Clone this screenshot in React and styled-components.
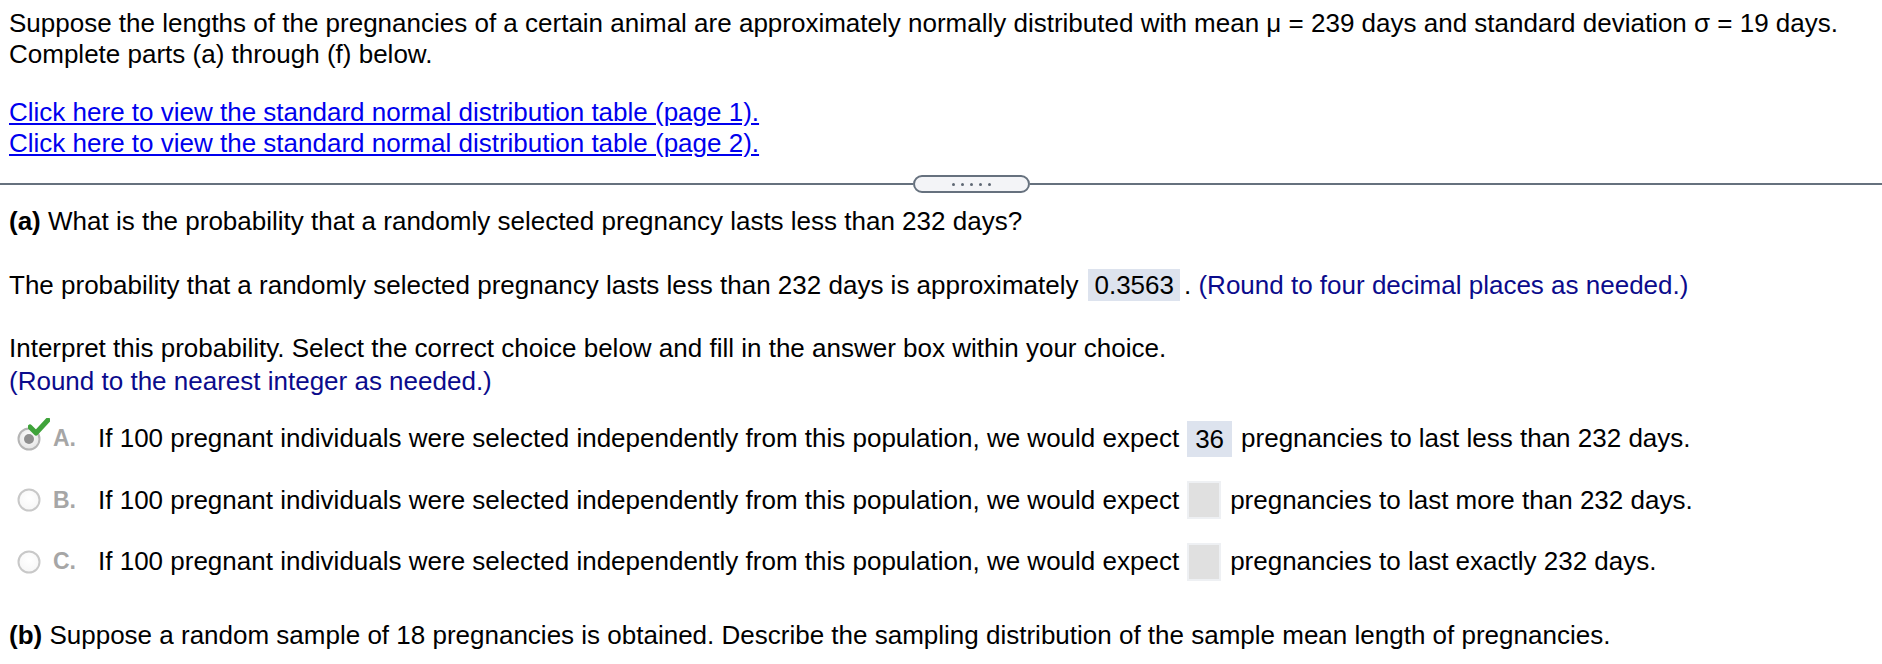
import React from "react";
import styled, { createGlobalStyle } from "styled-components";

const Global = createGlobalStyle`
  html, body { margin: 0; padding: 0; background: #fff; }
  body {
    font-family: "Liberation Sans", Arial, Helvetica, sans-serif;
    font-size: 26px;
    line-height: 31px;
    color: #000;
  }
`;

const Page = styled.div`
  padding-top: 8px;
  width: 1882px;
`;

const Section = styled.div`
  padding-left: 9px;
  margin-top: ${(p) => p.$mt || 0}px;
`;

const Para = styled.p`
  margin: 0;
  margin-top: ${(p) => p.$mt || 0}px;
  color: ${(p) => p.$color || "#000"};
  white-space: nowrap;
`;

const Link = styled.a`
  display: block;
  color: #0000ee;
  text-decoration: underline;
  text-underline-offset: 2px;
  white-space: nowrap;
`;

const Divider = styled.div`
  display: flex;
  align-items: center;
  height: 18px;
  margin-top: 16px;
`;

const Rule = styled.div`
  height: 2px;
  background: #66717e;
  flex: ${(p) => (p.$fixed ? `0 0 ${p.$fixed}px` : "1 1 auto")};
`;

const Pill = styled.div`
  flex: 0 0 auto;
  box-sizing: border-box;
  width: 117px;
  height: 18px;
  border: 2px solid #66717e;
  border-radius: 9px;
  background: #f3f4f7;
  display: flex;
  align-items: center;
  justify-content: center;
  gap: 6px;
`;

const Dot = styled.span`
  width: 3px;
  height: 3px;
  border-radius: 50%;
  background: #5f6874;
`;

const Bold = styled.b`
  font-weight: bold;
`;

const Row = styled.div`
  display: flex;
  align-items: center;
  height: ${(p) => p.$h || 34}px;
  margin-top: ${(p) => p.$mt || 0}px;
  white-space: nowrap;
`;

const Hint = styled.span`
  color: #0b0b8c;
`;

const AnswerBox = styled.span`
  display: inline-flex;
  align-items: center;
  height: 32px;
  padding: 0 6px;
  margin: 0 4px 0 10px;
  background: #dde3ee;
`;

const ChoiceList = styled.div`
  margin-top: 11px;
`;

const Choice = styled.div`
  display: flex;
  align-items: center;
  height: 61.5px;
  white-space: nowrap;
  padding-left: 17px;
`;

const RadioWrap = styled.span`
  position: relative;
  width: 24px;
  height: 24px;
  flex: 0 0 24px;
  display: inline-block;
`;

const Check = styled.svg`
  position: absolute;
  left: 11px;
  top: -9px;
`;

const Letter = styled.span`
  width: 45px;
  margin-left: 12px;
  color: #a6a6a6;
  font-weight: bold;
  font-size: 23px;
`;

const Blank = styled.span`
  display: inline-block;
  box-sizing: border-box;
  margin: 0 9px 0 8px;
  height: ${(p) => (p.$filled ? 36 : 38)}px;
  min-width: ${(p) => (p.$filled ? 40 : 34)}px;
  padding: 0 ${(p) => (p.$filled ? 8 : 0)}px;
  line-height: 36px;
  background: ${(p) => (p.$filled ? "#dde3ee" : "#e0e0e0")};
  border: ${(p) => (p.$filled ? "none" : "2px solid #eef0f3")};
`;

function Radio({ selected }) {
  return (
    <RadioWrap>
      <svg width="24" height="24" viewBox="0 0 24 24">
        <defs>
          <radialGradient id={selected ? "rgs" : "rgu"} cx="50%" cy="40%" r="60%">
            <stop offset="0%" stopColor="#ffffff" />
            <stop offset="100%" stopColor={selected ? "#e4e4e4" : "#f6f6f6"} />
          </radialGradient>
        </defs>
        <circle
          cx="12"
          cy="12"
          r="10.5"
          fill={`url(#${selected ? "rgs" : "rgu"})`}
          stroke={selected ? "#b5b5b5" : "#c8c8c8"}
          strokeWidth="2"
        />
        {selected && <circle cx="12" cy="12" r="5" fill="#8f8f8f" />}
      </svg>
      {selected && (
        <Check width="22" height="18" viewBox="0 0 22 18">
          <path
            d="M2 9 L8 15 L20 2"
            fill="none"
            stroke="#3fa33a"
            strokeWidth="5"
            strokeLinecap="round"
            strokeLinejoin="round"
          />
        </Check>
      )}
    </RadioWrap>
  );
}

const choices = [
  { l: "A.", v: "36", end: "pregnancies to last less than 232 days.", sel: true },
  { l: "B.", v: "", end: "pregnancies to last more than 232 days." },
  { l: "C.", v: "", end: "pregnancies to last exactly 232 days." },
];

export default function App() {
  return (
    <>
      <Global />
      <Page>
        <Section>
          <Para>
            Suppose the lengths of the pregnancies of a certain animal are approximately normally
            distributed with mean μ = 239 days and standard deviation σ = 19 days.
          </Para>
          <Para>Complete parts (a) through (f) below.</Para>
        </Section>
        <Section $mt={27}>
          <Link href="#">Click here to view the standard normal distribution table (page 1).</Link>
          <Link href="#">Click here to view the standard normal distribution table (page 2).</Link>
        </Section>
        <Divider>
          <Rule $fixed={913} />
          <Pill>
            <Dot />
            <Dot />
            <Dot />
            <Dot />
            <Dot />
          </Pill>
          <Rule />
        </Divider>
        <Section $mt={13}>
          <Para>
            <Bold>(a)</Bold> What is the probability that a randomly selected pregnancy lasts less
            than 232 days?
          </Para>
          <Row $mt={31}>
            The probability that a randomly selected pregnancy lasts less than 232 days is
            approximately
            <AnswerBox>0.3563</AnswerBox>.&nbsp;<Hint>(Round to four decimal places as needed.)</Hint>
          </Row>
          <Para $mt={31}>
            Interpret this probability. Select the correct choice below and fill in the answer box
            within your choice.
          </Para>
          <Para $mt={2} $color="#0b0b8c">
            (Round to the nearest integer as needed.)
          </Para>
        </Section>
        <ChoiceList>
          {choices.map((c) => (
            <Choice key={c.l}>
              <Radio selected={c.sel} />
              <Letter>{c.l}</Letter>
              If 100 pregnant individuals were selected independently from this population, we would
              expect
              <Blank $filled={!!c.v}>{c.v}</Blank>
              {c.end}
            </Choice>
          ))}
        </ChoiceList>
        <Section $mt={27}>
          <Para>
            <Bold>(b)</Bold> Suppose a random sample of 18 pregnancies is obtained. Describe the
            sampling distribution of the sample mean length of pregnancies.
          </Para>
        </Section>
      </Page>
    </>
  );
}
